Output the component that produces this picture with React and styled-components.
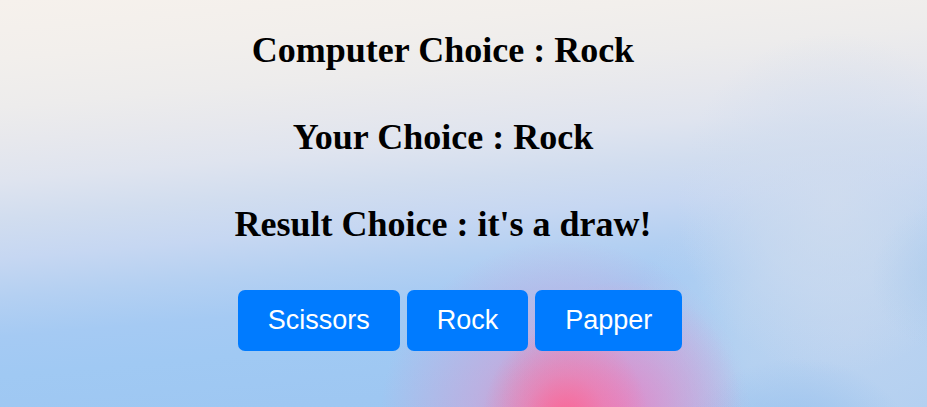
import React, { useState } from "react";
import styled, { createGlobalStyle } from "styled-components";

const GlobalStyle = createGlobalStyle`
  body {
    margin: 0;
  }
`;

const Page = styled.main`
  box-sizing: border-box;
  min-height: 100vh;
  padding: 30px 0 56px;
  display: flex;
  flex-direction: column;
  gap: 45px;
  background:
    radial-gradient(ellipse 9% 24% at 61% 104%, rgba(255, 95, 140, 0.9), rgba(252, 105, 150, 0.4) 50%, rgba(245, 130, 175, 0) 100%),
    radial-gradient(ellipse 13% 32% at 67% 101%, rgba(232, 130, 198, 0.7), rgba(225, 145, 205, 0.4) 50%, rgba(205, 165, 225, 0) 100%),
    radial-gradient(ellipse 20% 44% at 61% 103%, rgba(235, 135, 190, 0.85), rgba(215, 155, 210, 0.5) 50%, rgba(190, 175, 228, 0) 100%),
    radial-gradient(ellipse 12% 20% at 86% 108%, rgba(152, 193, 238, 0.95), rgba(152, 193, 238, 0) 100%),
    radial-gradient(ellipse 8% 18% at 102% 68%, rgba(172, 203, 236, 0.7), rgba(172, 203, 236, 0) 100%),
    radial-gradient(ellipse 17% 42% at 90% 50%, rgba(210, 221, 238, 0.8), rgba(210, 221, 238, 0.5) 50%, rgba(208, 220, 238, 0) 100%),
    radial-gradient(ellipse 24% 44% at 92% 82%, rgba(188, 211, 240, 1), rgba(190, 213, 240, 0.7) 50%, rgba(190, 215, 241, 0) 100%),
    linear-gradient(
      175deg,
      #f6f1ec 0%,
      #f2efec 12%,
      #edecec 22%,
      #e7e8ed 29%,
      #dfe4ef 37%,
      #d1ddef 45%,
      #c6d7f2 53%,
      #b4d0f2 61%,
      #a5caf3 69%,
      #a0c9f3 77%,
      #9cc5f1 100%
    );
`;

const Results = styled.section`
  display: flex;
  flex-direction: column;
  gap: 46px;
  padding-right: 41px;
`;

const ResultLine = styled.h2`
  margin: 0;
  color: #000;
  font-family: "Liberation Serif", "Times New Roman", serif;
  font-size: 36px;
  font-weight: 700;
  line-height: 41px;
  text-align: center;
`;

const Choices = styled.div`
  display: flex;
  justify-content: center;
  gap: 7px;
  padding-right: 7px;
`;

const ChoiceButton = styled.button`
  padding: 15px 30px;
  border: 0;
  border-radius: 7px;
  background: #007bff;
  color: #fff;
  font-family: "Liberation Sans", Arial, sans-serif;
  font-size: 27px;
  line-height: 31px;
  cursor: pointer;
`;

const OPTIONS = ["Scissors", "Rock", "Papper"];
const BEATS = { Scissors: "Papper", Rock: "Scissors", Papper: "Rock" };

function resultOf(you, computer) {
  if (you === computer) return "it's a draw!";
  return BEATS[you] === computer ? "you win!" : "you lose!";
}

export default function App() {
  const [round, setRound] = useState({ you: "Rock", computer: "Rock" });

  const play = (you) => {
    const computer = OPTIONS[Math.floor(Math.random() * OPTIONS.length)];
    setRound({ you, computer });
  };

  return (
    <>
      <GlobalStyle />
      <Page>
        <Results>
          <ResultLine>{`Computer Choice : ${round.computer}`}</ResultLine>
          <ResultLine>{`Your Choice : ${round.you}`}</ResultLine>
          <ResultLine>{`Result Choice : ${resultOf(round.you, round.computer)}`}</ResultLine>
        </Results>
        <Choices>
          {OPTIONS.map((option) => (
            <ChoiceButton key={option} type="button" onClick={() => play(option)}>
              {option}
            </ChoiceButton>
          ))}
        </Choices>
      </Page>
    </>
  );
}
